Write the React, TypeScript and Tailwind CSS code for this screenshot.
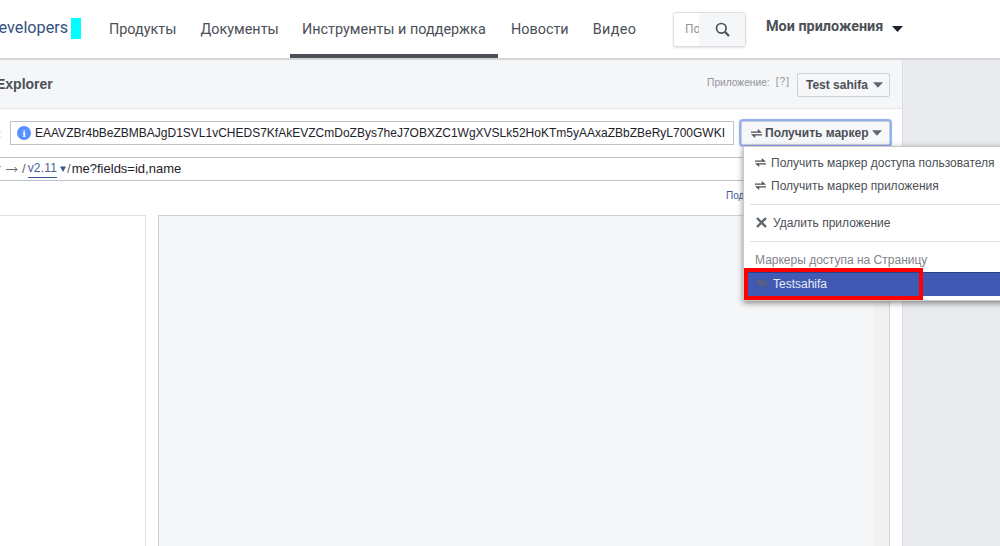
import React from "react";

const Swap = ({ className = "" }: { className?: string }) => (
  <svg width="11" height="11" viewBox="0 0 11 11" className={className} fill="currentColor">
    <path d="M0 3.4h6.8V1L11 4.8H0z" />
    <path d="M11 6.2H0l4.2 3.8V7.6H11z" />
  </svg>
);

const Caret = ({ className = "" }: { className?: string }) => (
  <svg width="11" height="6" viewBox="0 0 11 6" className={className} fill="currentColor">
    <path d="M0 0h11L5.5 6z" />
  </svg>
);

const nav = ["Продукты", "Документы", "Инструменты и поддержка", "Новости", "Видео"];

export default function App() {
  return (
    <div className="w-[1000px] h-[546px] overflow-hidden bg-[#e9ebee] font-['Liberation_Sans',sans-serif] relative flex flex-col">
      {/* header */}
      <header className="h-[60px] shrink-0 bg-white border-b-2 border-[#d4d5d7] flex items-start">
        <div className="w-[290px] shrink-0 flex items-start overflow-hidden">
          <span className="ml-[-12px] mt-[18px] w-[78px] shrink-0 text-[16.2px] leading-5 text-[#34507f] font-['Roboto',sans-serif]">Developers</span>
          <div className="ml-[5px] mt-[18px] w-[10px] h-[21px] shrink-0 bg-[#00ffff]" />
          <span className="ml-[28px] mt-[20px] text-[14.4px] leading-5 text-[#4b4f56] font-['Roboto',sans-serif] whitespace-nowrap">Продукты</span>
          <span className="ml-[24px] mt-[20px] text-[14.4px] leading-5 text-[#4b4f56] font-['Roboto',sans-serif] whitespace-nowrap">Документы</span>
        </div>
        <nav className="flex h-[58px] w-[371px] shrink-0 font-['Roboto',sans-serif] text-[14.4px] text-[#4b4f56]">
          <a className="w-[208px] h-[58px] px-3 pt-[20px] leading-5 border-b-4 border-[#4b4f56] whitespace-nowrap">{nav[2]}</a>
          <a className="ml-[13px] pt-[20px] leading-5">{nav[3]}</a>
          <a className="ml-[24px] pt-[20px] leading-5 tracking-[0.4px]">{nav[4]}</a>
        </nav>
        <div className="ml-[12px] mt-[12px] w-[73px] h-[35px] shrink-0 border border-[#dddfe2] rounded-[3px] shadow-[0_1px_2px_rgba(0,0,0,0.12)] flex overflow-hidden">
          <span className="w-[25px] pl-[11px] text-[12px] leading-[33px] text-[#90949c] overflow-hidden font-['Roboto',sans-serif]">По</span>
          <div className="flex-1 bg-[#f5f6f7] flex items-center justify-start pl-[16px]">
            <svg width="15" height="15" viewBox="0 0 15 15" fill="none" stroke="#4b4f56" strokeWidth="1.7">
              <circle cx="6.3" cy="6.3" r="4.8" />
              <path d="M9.8 9.8L14 14" strokeWidth="2.2" />
            </svg>
          </div>
        </div>
        <div className="ml-[20px] mt-[18px] flex items-start">
          <span className="text-[14.4px] leading-[18px] font-bold text-[#4b4f56] font-['Roboto',sans-serif] whitespace-nowrap">Мои приложения</span>
          <Caret className="ml-[9px] mt-[8px] text-[#1d2129]" />
        </div>
      </header>

      {/* main */}
      <main className="w-[903px] flex-1 bg-white border-r border-[#dddfe2] flex flex-col">
        <div className="h-[49px] shrink-0 bg-[#f5f6f7] border-b border-[#e5e6e9] flex items-start">
          <h1 className="ml-[-4px] mt-[15px] text-[14px] leading-[18px] font-bold text-[#4b4f56]">Explorer</h1>
          <div className="ml-auto mr-[12px] mt-[13px] flex items-start">
            <span className="mt-[4px] text-[10.2px] leading-[12px] text-[#90949c]">Приложение:</span>
            <span className="ml-[6px] mt-[3px] text-[10.2px] tracking-[1px] leading-[12px] text-[#90949c]">[?]</span>
            <button className="ml-[7px] w-[93px] h-[24px] bg-[#f6f7f9] border border-[#ced0d4] rounded-[2px] text-[12px] font-bold text-[#4b4f56] flex items-center pl-[8px]">
              Test sahifa
              <Caret className="ml-[5px] text-[#606770] w-[10px]" />
            </button>
          </div>
        </div>

        <div className="mt-[12px] flex items-center h-[24px]">
          <span className="w-[8px] text-[#606770] text-[11px] leading-none ml-[-2px]">:</span>
          <div className="ml-[4px] w-[724px] h-[24px] border border-[#bdc1c9] bg-white flex items-center pl-[6px]">
            <span className="w-[14px] h-[14px] rounded-full bg-[#5890ff] text-white text-[11px] font-bold leading-[14px] text-center font-['Liberation_Serif',serif] shrink-0">i</span>
            <span className="ml-[4px] text-[12px] text-[#1d2129] whitespace-nowrap overflow-hidden">EAAVZBr4bBeZBMBAJgD1SVL1vCHEDS7KfAkEVZCmDoZBys7heJ7OBXZC1WgXVSLk52HoKTm5yAAxaZBbZBeRyL700GWKI</span>
          </div>
          <button className="ml-[7px] w-[149px] h-[24px] bg-[#f6f7f9] border border-[#ced0d4] rounded-[2px] shadow-[0_0_1px_2px_rgba(106,143,240,0.75)] text-[12px] font-bold text-[#4b4f56] flex items-center pl-[9px]">
            <Swap className="text-[#4b4f56]" />
            <span className="ml-[3px]">Получить маркер</span>
            <Caret className="ml-[4px] text-[#606770] w-[10px]" />
          </button>
        </div>

        <div className="mt-[12px] mr-[12px] h-[24px] border-y border-[#bdc1c9] flex items-center text-[13px] whitespace-nowrap">
          <span className="ml-[-3px] w-[5px] text-[#5890ff] text-[12px]">r</span>
          <svg width="12" height="7" viewBox="0 0 12 7" className="ml-[4px] text-[#606770]" fill="none" stroke="currentColor" strokeWidth="1">
            <path d="M0 3.5h11M8.5 1l2.5 2.5L8.5 6" />
          </svg>
          <span className="ml-[4px] text-[#606770]">/</span>
          <span className="ml-[2px] h-[18px] leading-[16px] text-[12px] tracking-[0.2px] text-[#4b5f9c] border-b border-[#3b5998]">v2.11</span>
          <svg width="6" height="6" viewBox="0 0 6 6" className="ml-[3px] text-[#3b5998]" fill="currentColor">
            <path d="M0 0.5h6L3 6z" />
          </svg>
          <span className="ml-[1px] text-[#606770]">/</span>
          <span className="ml-[1px] text-[#1d2129]">me?fields=id,name</span>
        </div>

        <div className="h-[34px] shrink-0 flex justify-start">
          <span className="ml-[726px] mt-[9px] text-[10px] leading-[12px] text-[#3b5998]">Подробнее</span>
        </div>

        <div className="flex-1 flex items-stretch min-h-0">
          <div className="w-[146px] border-t border-r border-[#dddfe2] bg-white" />
          <div className="ml-[12px] w-[732px] bg-[#f5f6f7] border-t border-l border-r border-[#cfd0d2] flex justify-end">
            <div className="w-[15px] bg-[#f1f1f1]" />
          </div>
        </div>
      </main>

      {/* dropdown */}
      <div className="absolute left-[743px] top-[146px] w-[270px] h-[155px] bg-white border border-[#c9cacc] shadow-[0_2px_6px_rgba(0,0,0,0.45)] text-[#4b4f56] text-[12px]">
        <div className="h-[4px]" />
        <div className="h-[23px] flex items-center pl-[11px]">
          <Swap />
          <span className="ml-[5px] whitespace-nowrap">Получить маркер доступа пользователя</span>
        </div>
        <div className="h-[23px] flex items-center pl-[11px]">
          <Swap />
          <span className="ml-[5px] whitespace-nowrap">Получить маркер приложения</span>
        </div>
        <div className="mt-[7px] mx-[6px] border-t border-[#dddfe2]" />
        <div className="h-[36px] pb-[1px] flex items-center pl-[12px]">
          <svg width="11" height="11" viewBox="0 0 11 11" stroke="#606770" strokeWidth="2.4">
            <path d="M1 1l9 9M10 1l-9 9" />
          </svg>
          <span className="ml-[6px] whitespace-nowrap">Удалить приложение</span>
        </div>
        <div className="mx-[6px] border-t border-[#dddfe2]" />
        <div className="h-[30px] pl-[11px] pt-[11px] leading-[14px] text-[#7f8389] whitespace-nowrap">Маркеры доступа на Страницу</div>
        <div className="h-[24px] bg-[#4059b3] border-t border-[#2c3f87] flex items-center pl-[12px] text-[#e9ebf5]">
          <svg width="12" height="12" viewBox="0 0 12 12" className="-mt-[2px]" fill="#566080">
            <path d="M1 1.5l8.5 1v6L1 7.5z" />
            <path d="M10.5 0.5v10" stroke="#566080" strokeWidth="0.7" />
          </svg>
          <span className="ml-[5px] -mt-[2px]">Testsahifa</span>
        </div>
      </div>

      {/* red annotation */}
      <div className="absolute left-[744px] top-[268px] w-[179px] h-[32px] border-4 border-[#ff0000] pointer-events-none" />
    </div>
  );
}
